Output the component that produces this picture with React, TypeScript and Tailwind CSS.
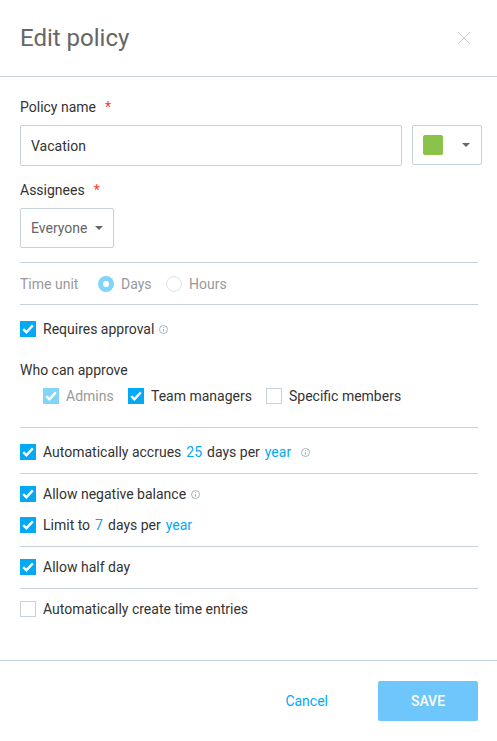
import React from "react";

const font = { fontFamily: "Roboto, sans-serif" };

function Check({ state }: { state: "on" | "off" | "disabled" }) {
  if (state === "off") {
    return <span className="block w-4 h-4 shrink-0 border border-[#c6d2db] bg-white" />;
  }
  return (
    <span className={`flex items-center justify-center w-4 h-4 shrink-0 ${state === "on" ? "bg-[#03a9f4]" : "bg-[#81d4fa]"}`}>
      <svg width="12" height="10" viewBox="0 0 12 10" fill="none">
        <path d="M1.2 5.2 4.4 8.2 10.8 1.4" stroke="#fff" strokeWidth="2.4" />
      </svg>
    </span>
  );
}

function Info() {
  return (
    <svg width="9" height="9" viewBox="0 0 9 9" fill="none" className="shrink-0">
      <circle cx="4.5" cy="4.5" r="4" stroke="#90a4ae" strokeWidth="0.8" />
      <path d="M4.5 4v2.6M4.5 2.2v1" stroke="#90a4ae" strokeWidth="0.9" />
    </svg>
  );
}

function Caret() {
  return <span className="block w-0 h-0 border-x-[4px] border-x-transparent border-t-[4px] border-t-[#666]" />;
}

const Divider = ({ className = "" }: { className?: string }) => (
  <div className={`h-px bg-[#c6d2db] ${className}`} />
);

export default function App() {
  return (
    <div style={font} className="w-[497px] h-[741px] bg-white text-[14px] leading-4 text-[#333] overflow-hidden flex flex-col">
      <header className="h-[77px] shrink-0 border-b border-[#c6d2db] flex items-center justify-between pl-5 pr-[26px]">
        <h1 className="text-[24px] leading-7 text-[#666] font-normal">Edit policy</h1>
        <svg width="14" height="14" viewBox="0 0 14 14" fill="none">
          <path d="M1 1 13 13M13 1 1 13" stroke="#c6d2db" strokeWidth="1" />
        </svg>
      </header>

      <main className="flex-1 pl-5 pr-[19px] pt-[22px]">
        <label className="flex gap-[9px] h-4">
          <span>Policy name</span>
          <span className="text-[#ff3b30]">*</span>
        </label>
        <div className="flex mt-[10px] w-[462px] gap-[10px]">
          <div className="w-[382px] h-[41px] border border-[#c6d2db] rounded-[2px] px-[10px] flex items-center">Vacation</div>
          <div className="w-[70px] h-10 border border-[#c6d2db] rounded-[2px] pl-[10px] pr-[11px] flex items-center justify-between">
            <span className="block w-5 h-5 rounded-[2px] bg-[#8bc34a]" />
            <Caret />
          </div>
        </div>
        <label className="flex gap-[9px] h-4 mt-[16px]">
          <span>Assignees</span>
          <span className="text-[#ff3b30]">*</span>
        </label>
        <div className="mt-[10px] w-[94px] h-10 border border-[#c6d2db] rounded-[2px] pl-[10px] pr-[10px] flex items-center justify-between text-[#666]">
          <span>Everyone</span>
          <Caret />
        </div>

        <Divider className="mt-[14px]" />
        <div className="h-[41px] flex items-center text-[#999]">
          <span className="w-[78px]">Time unit</span>
          <span className="flex items-center justify-center w-4 h-4 rounded-full bg-[#81d4fa]">
            <span className="block w-[6px] h-[6px] rounded-full bg-white" />
          </span>
          <span className="ml-[7px] w-[45px]">Days</span>
          <span className="block w-4 h-4 rounded-full border border-[#dde4e9]" />
          <span className="ml-[7px]">Hours</span>
        </div>
        <Divider />

        <div className="flex items-center h-4 mt-4 gap-[5px]">
          <Check state="on" />
          <span className="ml-[2px]">Requires approval</span>
          <Info />
        </div>
        <div className="mt-[25px] h-4">Who can approve</div>
        <div className="flex items-center h-4 mt-[10px] pl-[23px]">
          <Check state="disabled" />
          <span className="ml-[7px] w-[62px] text-[#999]">Admins</span>
          <Check state="on" />
          <span className="ml-[7px] w-[115px]">Team managers</span>
          <Check state="off" />
          <span className="ml-[7px]">Specific members</span>
        </div>
        <Divider className="mt-[23px]" />

        <div className="flex items-center h-4 mt-4">
          <Check state="on" />
          <span className="ml-[7px]">Automatically accrues</span>
          <span className="ml-[5px] text-[#03a9f4]">25</span>
          <span className="ml-[5px]">days per</span>
          <span className="ml-[5px] text-[#03a9f4]">year</span>
          <span className="ml-[10px] flex"><Info /></span>
        </div>
        <Divider className="mt-[13px]" />

        <div className="flex items-center h-4 mt-3 gap-[5px]">
          <Check state="on" />
          <span className="ml-[2px]">Allow negative balance</span>
          <Info />
        </div>
        <div className="flex items-center h-4 mt-[15px]">
          <Check state="on" />
          <span className="ml-[7px]">Limit to</span>
          <span className="ml-[5px] text-[#03a9f4]">7</span>
          <span className="ml-[5px]">days per</span>
          <span className="ml-[5px] text-[#03a9f4]">year</span>
        </div>
        <Divider className="mt-[13px]" />

        <div className="flex items-center h-4 mt-3 gap-[7px]">
          <Check state="on" />
          <span>Allow half day</span>
        </div>
        <Divider className="mt-[13px]" />

        <div className="flex items-center h-4 mt-3 gap-[7px]">
          <Check state="off" />
          <span>Automatically create time entries</span>
        </div>
      </main>

      <footer className="h-[81px] shrink-0 border-t border-[#c6d2db] flex items-start justify-end pt-5 pr-[19px]">
        <span className="h-10 flex items-center mr-[50px] text-[#03a9f4]">Cancel</span>
        <button className="w-[100px] h-10 rounded-[2px] bg-[#6ec6fa] text-white font-medium">SAVE</button>
      </footer>
    </div>
  );
}
